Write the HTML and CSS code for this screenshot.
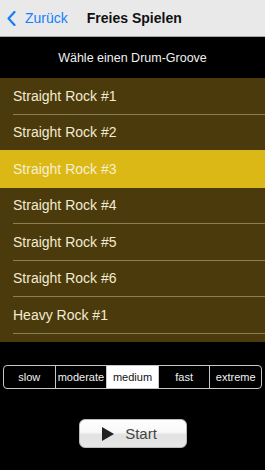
FILE: index.html
```html
<!DOCTYPE html>
<html lang="de">
<head>
  <meta charset="UTF-8">
  <meta name="viewport" content="width=device-width, initial-scale=1.0">
  <title>Freies Spielen</title>
  <link rel="stylesheet" href="styles.css">
</head>
<body>
  <!-- Navigation Bar -->
  <div class="navbar">
    <a class="back-btn" href="#">
      <svg class="chevron" width="9" height="15" viewBox="0 0 9 15">
        <polyline points="7.5,1 1.5,7.5 7.5,14" fill="none" stroke="#157efb" stroke-width="2.2" stroke-linecap="round" stroke-linejoin="round"/>
      </svg>
      <span>Zurück</span>
    </a>
    <div class="nav-title">Freies Spielen</div>
  </div>

  <!-- Header -->
  <div class="header">Wähle einen Drum-Groove</div>

  <!-- Groove List -->
  <ul class="groove-list">
    <li class="groove"><span>Straight Rock #1</span></li>
    <li class="groove"><span>Straight Rock #2</span></li>
    <li class="groove selected"><span>Straight Rock #3</span></li>
    <li class="groove"><span>Straight Rock #4</span></li>
    <li class="groove"><span>Straight Rock #5</span></li>
    <li class="groove"><span>Straight Rock #6</span></li>
    <li class="groove"><span>Heavy Rock #1</span></li>
  </ul>

  <!-- Tempo Selector -->
  <div class="tempo">
    <div class="segment">slow</div>
    <div class="segment">moderate</div>
    <div class="segment active">medium</div>
    <div class="segment">fast</div>
    <div class="segment">extreme</div>
  </div>

  <!-- Start Button -->
  <div class="start-wrap">
    <button class="start-btn">
      <svg width="12" height="14" viewBox="0 0 12 14"><polygon points="0,0 12,7 0,14" fill="#222"/></svg>
      <span>Start</span>
    </button>
  </div>
</body>
</html>
```

FILE: styles.css
```css
/* Reset */
* {
  margin: 0;
  padding: 0;
  box-sizing: border-box;
}

body {
  width: 265px;
  height: 470px;
  overflow: hidden;
  background: #000;
  font-family: "Liberation Sans", Arial, sans-serif;
}

/* Navigation Bar */
.navbar {
  height: 37px;
  background: #e9e9ea;
  border-bottom: 1px solid #a8a8a8;
  display: flex;
  align-items: center;
  padding-left: 7px;
}

.back-btn {
  display: flex;
  align-items: center;
  color: #157efb;
  text-decoration: none;
  font-size: 14px;
}

.chevron {
  margin-right: 9px;
}

.nav-title {
  margin-left: 19px;
  font-size: 14px;
  font-weight: bold;
  color: #111;
}

/* Header */
.header {
  height: 41px;
  display: flex;
  align-items: center;
  justify-content: center;
  color: #f0f0f0;
  font-size: 12.5px;
}

/* Groove List */
.groove-list {
  list-style: none;
  height: 264px;
  overflow: hidden;
  background: #4a3a0c;
}

.groove {
  height: 36.5px;
  padding-left: 13px;
}

.groove span {
  display: flex;
  align-items: center;
  height: 100%;
  border-bottom: 1px solid #8d7d52;
  color: #f3ebd2;
  font-size: 14px;
}

.groove.selected {
  background: #dbb816;
  margin-top: -1px;
  height: 37.5px;
}

.groove.selected span {
  border-bottom: none;
  color: #f7efd0;
}

/* Tempo Selector */
.tempo {
  display: flex;
  margin: 23px 3px 0 3px;
  height: 24px;
  border: 1px solid #c8c8c8;
  border-radius: 4px;
  overflow: hidden;
}

.segment {
  flex: 1;
  display: flex;
  align-items: center;
  justify-content: center;
  color: #f2f2f2;
  font-size: 11px;
  border-left: 1px solid #c8c8c8;
}

.segment:first-child {
  border-left: none;
}

.segment.active {
  background: #fff;
  color: #111;
}

/* Start Button */
.start-wrap {
  display: flex;
  justify-content: center;
  margin-top: 30px;
}

.start-btn {
  width: 108px;
  height: 29px;
  border: 1px solid #bbb;
  border-radius: 6px;
  background: linear-gradient(to bottom, #ffffff 0%, #f8f8f8 45%, #e2e2e2 55%, #e6e6e6 100%);
  display: flex;
  align-items: center;
  justify-content: center;
  gap: 11px;
  font-family: "Liberation Sans", Arial, sans-serif;
  font-size: 15px;
  color: #444;
  padding-right: 6px;
}
```
